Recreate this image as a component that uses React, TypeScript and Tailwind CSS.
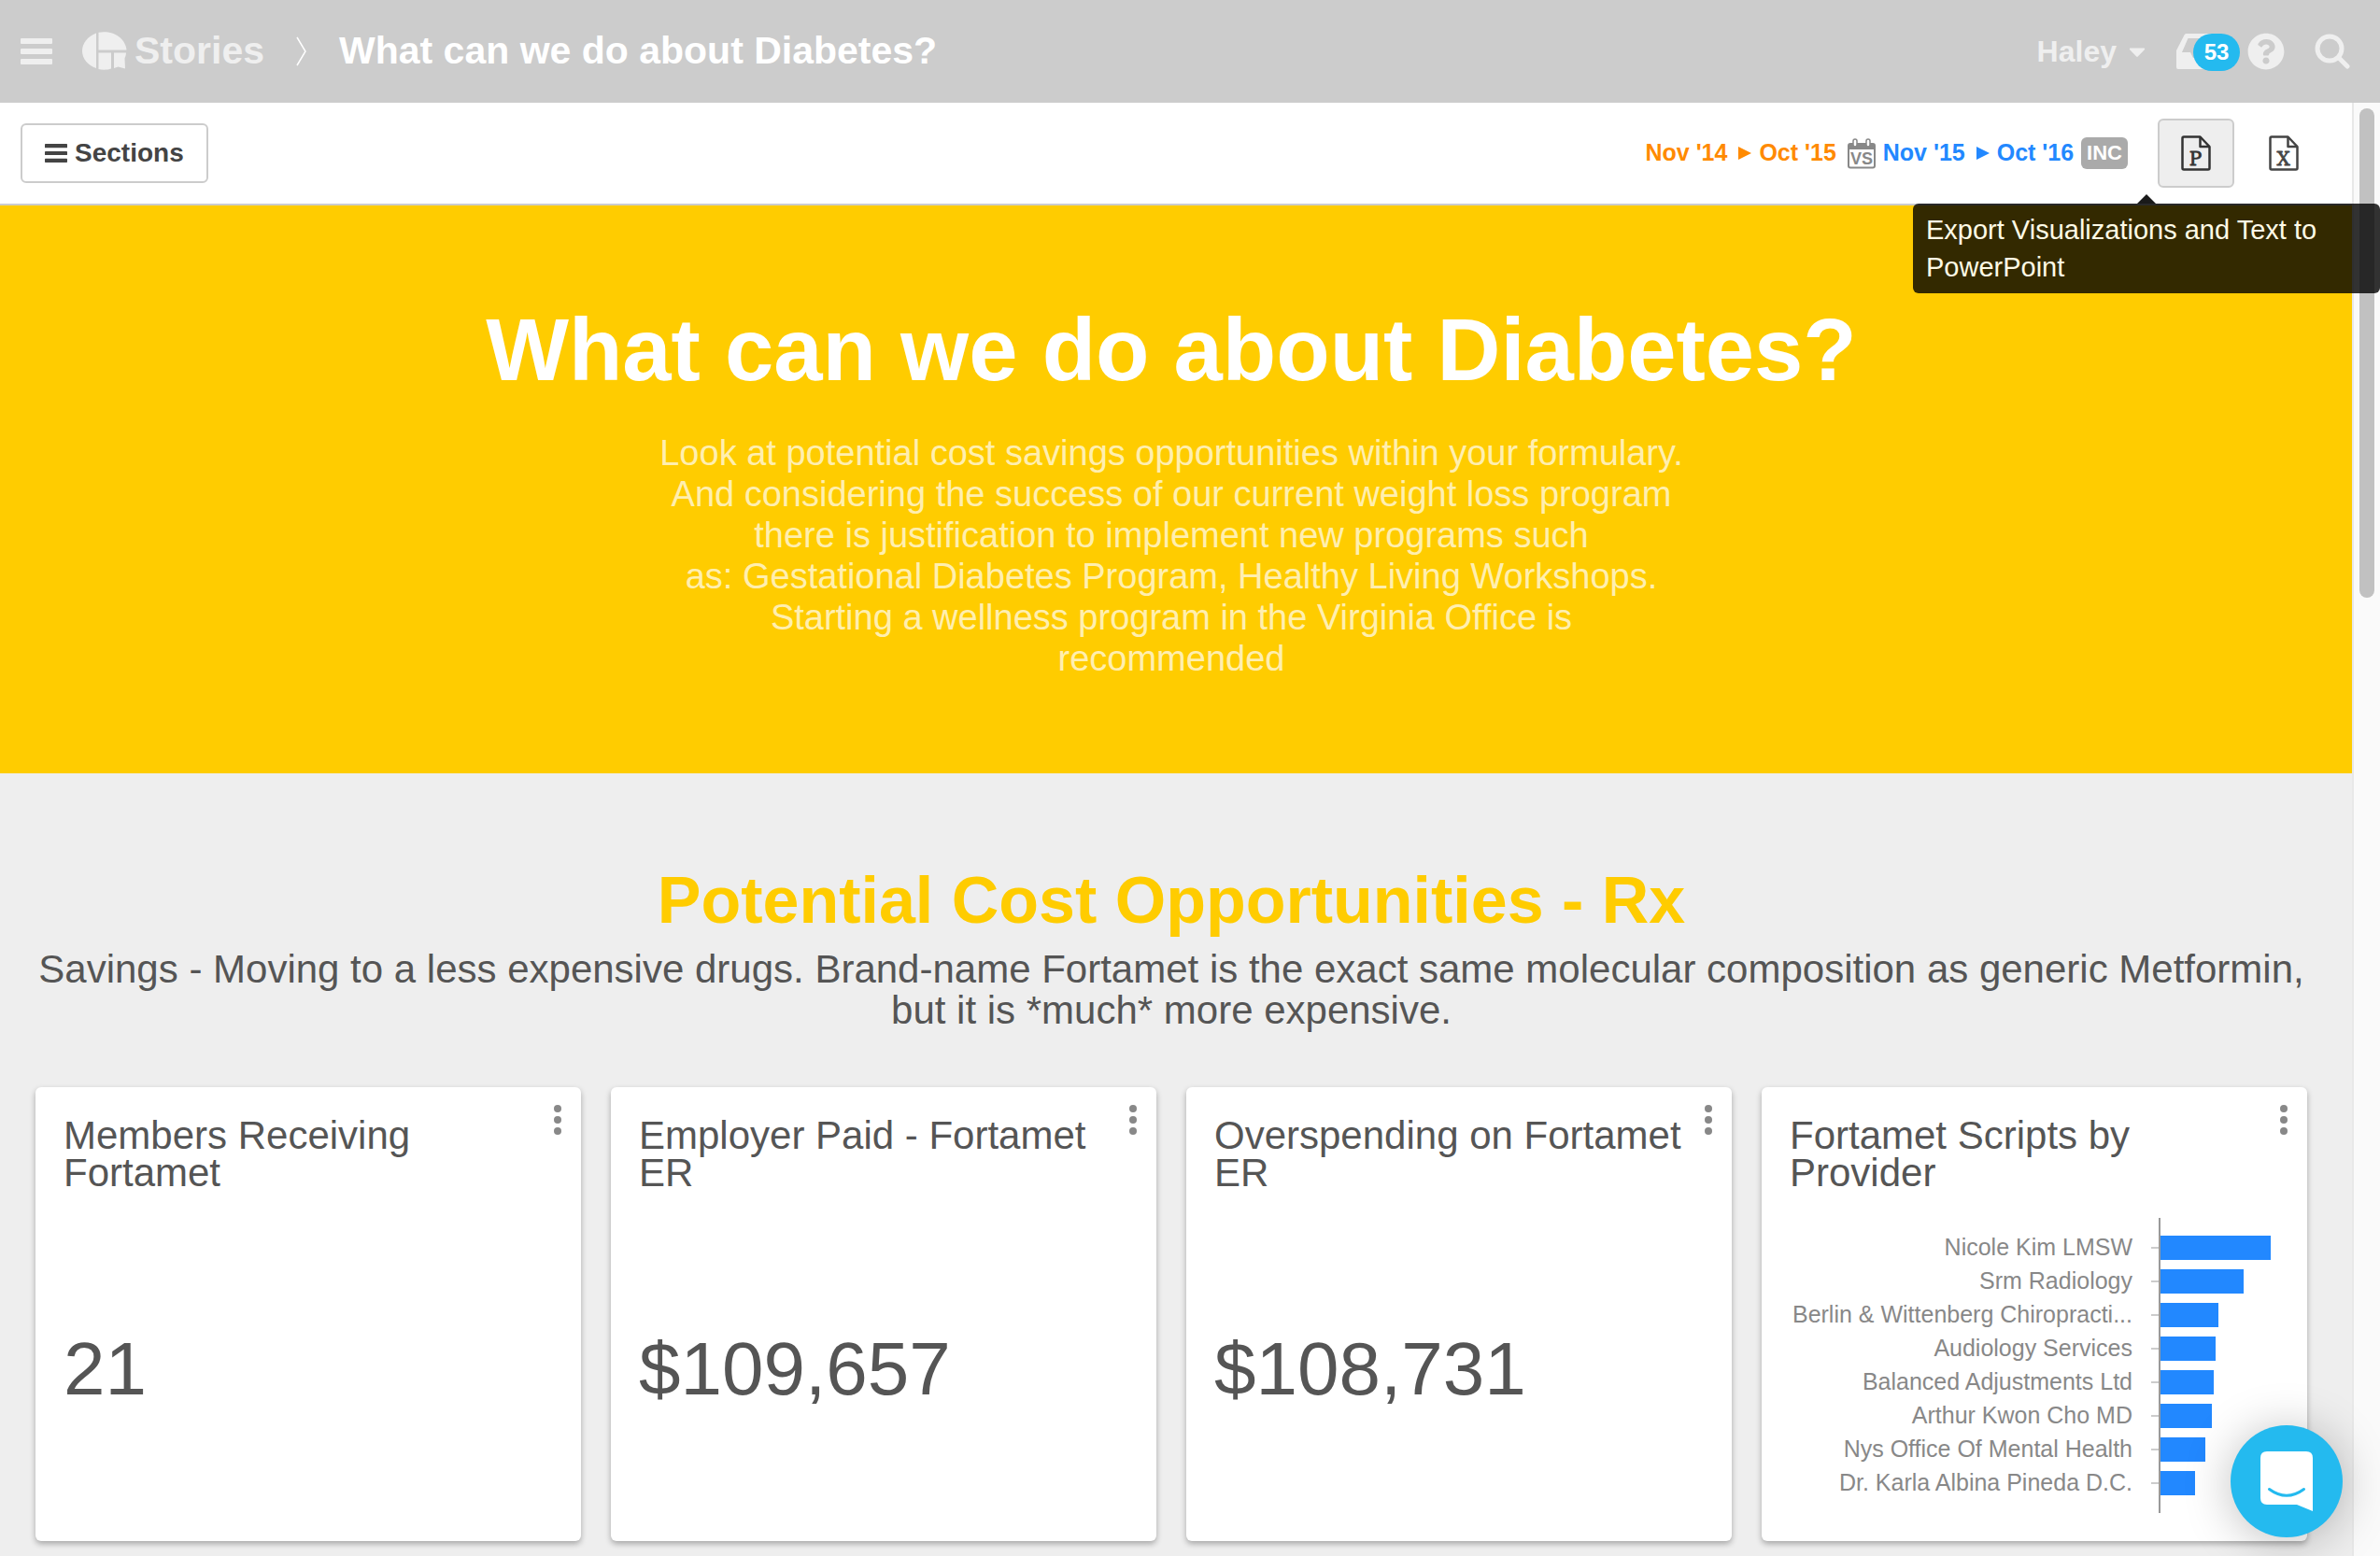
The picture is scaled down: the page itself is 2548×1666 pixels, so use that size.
import { FaCaretDown, FaQuestionCircle } from "react-icons/fa";

const bars = [
  { label: "Nicole Kim LMSW", value: 118 },
  { label: "Srm Radiology", value: 89 },
  { label: "Berlin & Wittenberg Chiropracti...", value: 62 },
  { label: "Audiology Services", value: 59 },
  { label: "Balanced Adjustments Ltd", value: 57 },
  { label: "Arthur Kwon Cho MD", value: 55 },
  { label: "Nys Office Of Mental Health", value: 48 },
  { label: "Dr. Karla Albina Pineda D.C.", value: 37 },
];

const stats = [
  { title: "Members Receiving Fortamet", value: "21" },
  { title: "Employer Paid - Fortamet ER", value: "$109,657" },
  { title: "Overspending on Fortamet ER", value: "$108,731" },
];

const MenuIcon = ({ className }: { className: string }) => (
  <svg viewBox="0 0 34 28" className={className} fill="currentColor">
    <rect width="34" height="6" rx="1" />
    <rect y="11" width="34" height="6" rx="1" />
    <rect y="22" width="34" height="6" rx="1" />
  </svg>
);

const Logo = () => (
  <svg viewBox="0 0 48 42" className="h-[42px] w-12" fill="currentColor">
    <path d="M15 1.5C6 5 0 12 0 20.500S6 36 15 39z" />
    <path d="M17.500 .8C32 -2 46 6 47.500 19.500H17.500z" />
    <path d="M17.500 22.500H31V39.500C27 41 21.500 41 17.500 40z" />
    <path d="M34 22.500H47C47 25 46 27 45.500 28.500L46 39.500L38.500 37.500L34 39z" />
  </svg>
);

const InboxIcon = () => (
  <svg viewBox="0 0 48 38" className="h-[38px] w-12" fill="currentColor" fillRule="evenodd">
    <path d="M10.500 0H37.500Q39 0 39.500 1.500L48 18V36Q48 38 46 38H2Q0 38 0 36V18L8.500 1.500Q9 0 10.500 0zM12.500 5L6 20H15L18 26H30L33 20H42L35.500 5z" />
  </svg>
);

const SearchIcon = () => (
  <svg viewBox="0 0 38 38" className="size-[38px]" fill="none" stroke="currentColor" strokeLinecap="round">
    <circle cx="16" cy="16" r="13" strokeWidth="5" />
    <path d="M26 26L35 35" strokeWidth="5" />
  </svg>
);

const CalendarIcon = () => (
  <svg viewBox="0 0 30 33" className="h-[33px] w-[30px]" fill="none">
    <rect x="1" y="6" width="28" height="25.500" rx="2" stroke="#888" strokeWidth="2" />
    <path d="M1 6H29V12H1z" fill="#888" />
    <rect x="6" y="1" width="4" height="8" rx="2" fill="#fff" stroke="#888" strokeWidth="1.500" />
    <rect x="20" y="1" width="4" height="8" rx="2" fill="#fff" stroke="#888" strokeWidth="1.500" />
    <text x="15" y="27.500" textAnchor="middle" fontSize="18" fontWeight="700" fontFamily="Liberation Sans, sans-serif" fill="#888">
      VS
    </text>
  </svg>
);

const FileIcon = ({ letter }: { letter: string }) => (
  <svg viewBox="0 0 32 38" className="h-[38px] w-8" fill="none" stroke="currentColor" strokeWidth="2.500" strokeLinejoin="round">
    <path d="M20.500 1.500H3Q1.500 1.500 1.500 3V35Q1.500 36.500 3 36.500H29Q30.500 36.500 30.500 35V12z" />
    <path d="M20.500 1.500V12H30.500" />
    <text x="15.500" y="31.500" textAnchor="middle" fontSize="20" fontFamily="DejaVu Serif, serif" fill="currentColor" strokeWidth="0.800">
      {letter}
    </text>
  </svg>
);

const Arrow = () => (
  <svg viewBox="0 0 14 14" className="mr-2 ml-3 size-[14px]" fill="currentColor">
    <path d="M0 0L14 7L0 14z" />
  </svg>
);

const CardHeader = ({ title }: { title: string }) => (
  <div className="flex items-start justify-between pt-8 pr-5 pl-[30px]">
    <h3 className="text-[42px] leading-10">{title}</h3>
    <button aria-label="Card options" className="-mt-[14px] shrink-0 text-[#888]">
      <svg viewBox="0 0 10 34" className="h-[34px] w-[10px]" fill="currentColor">
        <circle cx="5" cy="5" r="4" />
        <circle cx="5" cy="17" r="4" />
        <circle cx="5" cy="29" r="4" />
      </svg>
    </button>
  </div>
);

const card = "flex h-[486px] flex-col rounded-md bg-white shadow-[0_3px_6px_rgba(0,0,0,0.3)]";

export default function App() {
  return (
    <div className="relative flex h-screen flex-col overflow-hidden bg-[#eee] font-['Liberation_Sans',sans-serif] text-[#555]">
      <header className="flex h-[110px] shrink-0 items-center bg-[#ccc] pr-8 pl-[22px] text-[#efefef]">
        <button aria-label="Menu">
          <MenuIcon className="h-7 w-[34px]" />
        </button>
        <a href="#stories" className="ml-8 flex items-center gap-2 text-[41px] font-bold">
          <Logo />
          Stories
        </a>
        <svg viewBox="0 0 12 32" className="mx-[34px] h-8 w-3" fill="none" stroke="#fff" strokeWidth="1.500">
          <path d="M1 1L10 16L1 31" />
        </svg>
        <span className="text-[41px] font-bold text-white">What can we do about Diabetes?</span>
        <div className="ml-auto flex items-center">
          <button className="flex items-center gap-2 text-[32px] font-bold">
            Haley
            <FaCaretDown className="size-7" />
          </button>
          <button aria-label="Notifications" className="relative ml-7">
            <InboxIcon />
            <span className="absolute top-0 left-[18px] flex h-10 w-[50px] items-center justify-center rounded-full bg-[#24baef] text-2xl font-bold text-white">
              53
            </span>
          </button>
          <button aria-label="Help" className="ml-7">
            <FaQuestionCircle className="size-10" />
          </button>
          <button aria-label="Search" className="ml-8">
            <SearchIcon />
          </button>
        </div>
      </header>

      <div className="flex min-h-0 flex-1">
        <main className="min-w-0 flex-1 overflow-hidden">
          <div className="flex h-[110px] items-center border-b-2 border-[#ccc] bg-white pr-8 pl-[22px]">
            <button className="flex h-16 items-center gap-2 rounded-md border-2 border-[#ccc] px-6 text-[28px] font-bold text-[#444]">
              <MenuIcon className="h-5 w-6" />
              Sections
            </button>
            <div className="ml-auto flex items-center text-[25px] font-bold">
              <span className="flex items-center text-[#ff8a00]">
                Nov '14 <Arrow /> Oct '15
              </span>
              <span className="mr-2 ml-3">
                <CalendarIcon />
              </span>
              <span className="flex items-center text-[#2288ff]">
                Nov '15 <Arrow /> Oct '16
              </span>
              <span className="ml-2 rounded-md bg-[#aaa] px-[6px] text-[22px] leading-[34px] text-white">INC</span>
            </div>
            <div className="ml-8 flex gap-3">
              <button aria-label="Export to PowerPoint" className="flex h-[74px] w-[82px] items-center justify-center rounded-md border-2 border-[#ccc] bg-[#eee] text-[#333]">
                <FileIcon letter="P" />
              </button>
              <button aria-label="Export to Excel" className="flex h-[74px] w-[82px] items-center justify-center text-[#444]">
                <FileIcon letter="X" />
              </button>
            </div>
          </div>

          <section className="flex h-[608px] flex-col items-center bg-[#ffcc00] pt-[103px] pr-12 pl-[38px] text-center text-white">
            <h1 className="text-[94px] leading-[104px] font-bold">What can we do about Diabetes?</h1>
            <p className="mt-9 text-[38px] leading-[44px] text-white/70">
              Look at potential cost savings opportunities within your formulary.
              <br />
              And considering the success of our current weight loss program
              <br />
              there is justification to implement new programs such
              <br />
              as: Gestational Diabetes Program, Healthy Living Workshops.
              <br />
              Starting a wellness program in the Virginia Office is
              <br />
              recommended
            </p>
          </section>

          <section className="pt-24 pr-12 pl-[38px]">
            <h2 className="text-center text-[70px] leading-[80px] font-bold text-[#ffcc00]">Potential Cost Opportunities - Rx</h2>
            <p className="mt-3 text-center text-[42px] leading-[44px]">
              Savings - Moving to a less expensive drugs. Brand-name Fortamet is the exact same molecular composition as generic Metformin,
              but it is *much* more expensive.
            </p>
            <div className="mt-[60px] grid grid-cols-4 gap-8">
              {stats.map((s) => (
                <article key={s.title} className={card}>
                  <CardHeader title={s.title} />
                  <p className="mt-[140px] px-[30px] text-[80px] leading-[100px]">{s.value}</p>
                </article>
              ))}
              <article className={card}>
                <CardHeader title="Fortamet Scripts by Provider" />
                <div className="mt-7 grid grid-cols-[425px_1fr] pr-9">
                  <div className="py-[14px]">
                    {bars.map((b) => (
                      <div key={b.label} className="flex h-9 items-center justify-end gap-5 text-[25px] whitespace-nowrap text-[#888]">
                        {b.label}
                        <span className="h-[2px] w-2 bg-[#ccc]" />
                      </div>
                    ))}
                  </div>
                  <div className="border-l-2 border-[#999] py-[14px]">
                    {bars.map((b) => (
                      <div key={b.label} className="flex h-9 items-center">
                        <div className="h-[26px] bg-[#2288ff]" style={{ width: b.value }} />
                      </div>
                    ))}
                  </div>
                </div>
              </article>
            </div>
          </section>
        </main>
        <div className="w-[30px] shrink-0 border-l-2 border-[#e8e8e8] bg-[#fafafa] pt-[6px] pl-[6px]">
          <div className="h-[524px] w-4 rounded-full bg-[#c1c1c1]" />
        </div>
      </div>

      <div role="tooltip" className="absolute top-[218px] right-0 w-[500px] rounded-md bg-black/80 px-[14px] pt-2 pb-2 text-[29px] leading-10 text-[#fffbe6]">
        <svg viewBox="0 0 20 10" className="absolute bottom-full left-1/2 h-[10px] w-5 -translate-x-1/2" fill="#1a1a1a">
          <path d="M10 0L20 10H0z" />
        </svg>
        Export Visualizations and Text to PowerPoint
      </div>

      <button aria-label="Open chat" className="absolute right-10 bottom-5 flex size-[120px] items-center justify-center rounded-full bg-[#24baef] shadow-[0_4px_50px_rgba(0,0,0,0.25)]">
        <svg viewBox="0 0 56 64" className="h-16 w-14" fill="#fff">
          <path d="M7 0H49Q56 0 56 7V64L39 57H7Q0 57 0 50V7Q0 0 7 0z" />
          <path d="M9.500 40.500Q28 54 46.500 40.500" fill="none" stroke="#24baef" strokeWidth="3" strokeLinecap="round" />
        </svg>
      </button>
    </div>
  );
}
